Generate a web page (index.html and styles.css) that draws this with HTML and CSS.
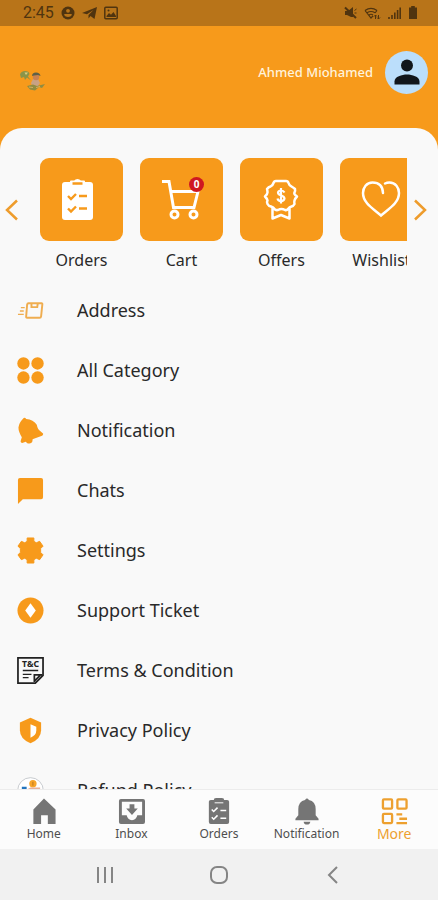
FILE: index.html
```html
<!DOCTYPE html>
<html lang="en">
<head>
<meta charset="utf-8">
<meta name="viewport" content="width=device-width, initial-scale=1">
<title>More</title>
<link rel="stylesheet" href="styles.css">
</head>
<body>
<div class="status">
  <span class="clock">2:45</span>
  <svg width="14" height="14" viewBox="0 0 14 14"><circle cx="7" cy="7" r="6.500" fill="currentColor"/><circle cx="7" cy="4.800" r="1.900" fill="#b87419"/><path d="M3.300 8h7.400v1.200Q9.800 11 7 11T3.300 9.200z" fill="#b87419"/></svg>
  <svg width="15" height="14" viewBox="0 0 15 14"><path d="M0 7 15 1l-2.500 12-4-3-2 2.500V9l5-5-6.500 4.300z" fill="currentColor"/></svg>
  <svg width="14" height="14" viewBox="0 0 14 14"><rect x=".8" y="1.300" width="12.400" height="11.400" rx="1" fill="none" stroke="currentColor" stroke-width="1.500"/><path d="m2.500 10 2.500-3 2 1.800L9.500 6l2.500 4v1H2.500z" fill="currentColor"/><circle cx="4.500" cy="4.500" r="1" fill="currentColor"/></svg>
  <span class="spacer"></span>
  <svg width="13" height="14" viewBox="0 0 13 14"><path d="M1 5h3l5-4v10L7 11 3 9H1z" fill="currentColor"/><path d="m1 1.500 11 10.500" stroke="currentColor" stroke-width="2"/><path d="M10.500 4.500 12.500 3M10.500 7h2" stroke="currentColor"/></svg>
  <svg width="17" height="14" viewBox="0 0 17 14" fill="none" stroke="currentColor" stroke-width="1.200"><path d="M1 4.500Q7 .2 13 4.500M3 6.800q4-2.600 8 0M5 9q2-1.500 4 0M1 4.500 7 12l2-2.200M13 4.500l-2 2.500"/><path d="M11.500 13V9M10 10.500 11.500 9 13 10.500M14.500 9v4M13 11.500l1.500 1.500 1.500-1.500" stroke-width="1"/></svg>
  <svg width="13" height="14" viewBox="0 0 13 14" stroke="currentColor" stroke-width="1.600"><path d="M1 13v-2M4 13V9M6.800 13V6.500M9.600 13V4M12.200 13V1.500"/></svg>
  <svg width="10" height="14" viewBox="0 0 10 14"><path d="M3.200 0h3.600v1.500H9V13H1V1.500h2.200z" fill="currentColor"/></svg>
</div>

<header class="header">
  <svg class="logo" width="26" height="22" viewBox="0 0 26 22"><path d="M0 4.500Q1 1 5 1q4 0 4.500 3L8 6.500l3 4-4-3-2 2.500-1-3-3 1z" fill="#8a9449"/><path d="M4.500 2.500H8L6 5z" fill="#d9cf86"/><path d="m11 13 2-4h5l2 4-2 3h-6z" fill="#c9a284"/><circle cx="16" cy="7" r="3.200" fill="#c98252"/><path d="M12 6q0-3.500 4-3.500T20.500 6L18 5l-4 .5z" fill="#5f6047"/><path d="m7 16 6-1.500 4 1.500 8-2-3 4-3-1-4 3.500-5-1z" fill="#918c41"/><path d="m9 17 4 .5m3 0 4-1" stroke="#d3b060"/></svg>
  <span class="user">Ahmed Miohamed</span>
  <span class="avatar"><svg width="26" height="26" viewBox="0 0 26 26" fill="#11161c"><circle cx="13" cy="6.500" r="6"/><path d="M.5 25.500v-3C.5 17.500 8 15.500 13 15.500s12.500 2 12.500 7v3z"/></svg></span>
</header>

<main class="sheet">
  <section class="carousel" aria-label="Shortcuts">
    <button class="arrow arrow-prev" aria-label="Previous"><svg width="14" height="22" viewBox="0 0 14 22"><path d="M12 1.500 2 11l10 9.500"/></svg></button>
    <div class="track">
      <a class="card" href="#orders"><span class="tile"><svg width="48" height="48" viewBox="0 0 48 48"><rect x="4" y="6" width="31" height="38" rx="3" fill="#fff"/><path d="M13 8V5.500h3.500q3-3 6 0H26V8z" fill="#fff" stroke="#fff" stroke-width="2" stroke-linejoin="round"/><path d="M14.500 7.500h10" stroke="#f79a1b" stroke-width="2.500"/><path d="m10 20 3 3 5-5m3 2h8M10 32.500l3 3 5-5m3 2h8" fill="none" stroke="#f79a1b" stroke-width="2.400"/></svg></span>Orders</a>
      <a class="card" href="#cart"><span class="tile"><svg width="48" height="48" viewBox="0 0 48 48" fill="none" stroke="#fff" stroke-width="3"><path d="M4 5.500h7l4.500 26H36l5-20M13 15.500h27"/><circle cx="16.500" cy="38.500" r="3.500"/><circle cx="35.500" cy="38.500" r="3.500"/></svg><span class="badge">0</span></span>Cart</a>
      <a class="card" href="#offers"><span class="tile"><svg width="48" height="48" viewBox="0 0 48 48" fill="none" stroke="#fff"><path d="M18 5H28Q30 5 30.500 7T33.500 10.500T37 13Q37.500 15 36.500 16.500T39 20.500Q37 22.500 36.500 24.500T36.500 28Q35.500 30 33.500 30.500T30 33Q29 34.500 27 34Q23.500 32 20 34Q17.500 34.500 16.500 33T13 30.500Q10.500 30 9.500 28T9.500 24.500Q9 22.500 7 20.500Q9.500 18 9.500 16.500T9 13Q10.500 11 12.500 10.500T15.500 7Q16 5 18 5zM14.500 32v10.500l8.500-3.500 8.500 3.500V32" stroke-width="2.500" stroke-linejoin="round"/><path d="M26.500 16.500q-1-2-3.500-2t-3 2q0 2 3.200 3t3.300 3Q26 25 23 25T19.500 22.500M23 12v15.500" stroke-width="2.200"/></svg></span>Offers</a>
      <a class="card" href="#wishlist"><span class="tile"><svg width="48" height="48" viewBox="0 0 48 48"><path d="M25 17Q24.500 6.500 14.500 6.500C8.500 6.500 5 11.500 5 17 5 27 15 32.500 23 39.500c8-7 18-12.500 18-22.500C41 11.500 37.500 6.500 31.500 6.500q-2.500 0-4.500 1" fill="none" stroke="#fff" stroke-width="2.500" stroke-linecap="round"/></svg></span>Wishlist</a>
    </div>
    <button class="arrow arrow-next" aria-label="Next"><svg width="14" height="22" viewBox="0 0 14 22"><path d="m2 1.500 10 9.500-10 9.500"/></svg></button>
  </section>

  <nav class="menu" aria-label="Account">
    <a class="row" href="#address"><svg width="28" height="28" viewBox="0 0 28 28" fill="none" stroke="#efad50" stroke-width="2"><path d="M12 6.500h13.500q1 0 .8 1L25 20q-.2 1.500-1.500 1.500H10.500q-1.200 0-1-1.500L10.500 8q.2-1.500 1.500-1.500zM15 7v3.500h6L21.500 7"/><path d="M4 11h4M3 14.500h4M1 18h6" stroke-width="1.500"/></svg>Address</a>
    <a class="row" href="#category"><svg width="28" height="28" viewBox="0 0 28 28" fill="#f79a1b"><circle cx="6.700" cy="6.700" r="6.400"/><circle cx="21.300" cy="6.700" r="6.400"/><circle cx="6.700" cy="21.300" r="6.400"/><circle cx="21.300" cy="21.300" r="6.400"/></svg>All Category</a>
    <a class="row" href="#notification"><svg width="28" height="28" viewBox="0 0 28 28" fill="#f79a1b"><path d="M6 2Q8-.5 9.500 2Q17 2.500 20.500 8Q21.500 13 24 14.500L27 17Q27.500 18.500 26 19.500L5.500 27Q3.500 27 3.800 25L5 21Q1.500 15.500 1.500 11Q2 6 6 2z"/><path d="M9 24.500 16 22q1 5-3 5.500-3.500 0-4-3z"/></svg>Notification</a>
    <a class="row" href="#chats"><svg width="28" height="28" viewBox="0 0 28 28" fill="#f79a1b"><path d="M3 1h22q2 0 2 2v18q0 2-2 2H6l-5 5V3q0-2 2-2z"/></svg>Chats</a>
    <a class="row" href="#settings"><svg width="28" height="28" viewBox="0 0 28 28" fill="#f79a1b"><path d="M10.500 1h7v3.500L20 6l3.500-1.500 3.500 5-2.500 2.500v4l2.500 2.500-3.500 5L20 22l-2.500 1.500V27h-7v-3.500L8 22l-3.500 1.500-3.500-5L3.500 16v-4L1 9.500l3.500-5L8 6l2.500-1.500z" stroke="#f79a1b" stroke-linejoin="round"/></svg>Settings</a>
    <a class="row" href="#support"><svg width="28" height="28" viewBox="0 0 28 28"><circle cx="14" cy="14" r="13.500" fill="#f79a1b"/><path d="m14 6.500 5.500 7.500-5.500 7.500L8.500 14z" fill="#fff"/></svg>Support Ticket</a>
    <a class="row" href="#terms"><svg width="28" height="28" viewBox="0 0 28 28" fill="none" stroke="#222" stroke-width="1.800"><path d="M1 1h26v18l-8 8H1zM18 26v-7.500h8M24 19l-6 6"/><path d="M6 14h16M6 18h9M6 21.500h6" stroke-width="1.300"/><text x="14" y="10.500" class="terms">T&amp;C</text></svg>Terms &amp; Condition</a>
    <a class="row" href="#privacy"><svg width="28" height="28" viewBox="0 0 28 28"><path d="m14 .8 11 5v8q0 9-11 13.500Q3 22.800 3 13.800v-8z" fill="#f79a1b"/><path d="M14 7.500 20 10v4q0 5-6 7.500z" fill="#fff"/></svg>Privacy Policy</a>
    <a class="row" href="#refund"><svg width="28" height="28" viewBox="0 0 28 28"><circle cx="14" cy="14" r="13.300" fill="#fff" stroke="#b9bcc2" stroke-width=".8"/><circle cx="16.500" cy="7" r="3.800" fill="#f7a52a"/><path d="M16.500 5v4" stroke="#b9751c"/><path d="m10 13 4-2h10v5H10z" fill="#e7b29a"/><path d="M5 10h5v10l-5-2z" fill="#2375bf"/></svg>Refund Policy</a>
  </nav>
</main>

<nav class="tabs" aria-label="Main">
  <a class="tab" href="#home"><svg width="28" height="28" viewBox="0 0 28 28" fill="#757575"><path d="m14.500 .5 12 11.500v15h-8v-9h-7v9h-8V12z"/></svg>Home</a>
  <a class="tab" href="#inbox"><svg width="28" height="28" viewBox="0 0 28 28"><path d="M3 1h23q2 0 2 2v22q0 2-2 2H3q-2 0-2-2V3q0-2 2-2zm1 3v14h5q1 5 5.500 5t5.500-5h5V4z" fill="#757575" fill-rule="evenodd"/><path d="M12 6.500h5V11h3.500l-6 6.500-6-6.500H12z" fill="#757575"/></svg>Inbox</a>
  <a class="tab" href="#orders"><svg width="28" height="28" viewBox="0 0 28 28"><rect x="4" y="2" width="21" height="25" rx="2" fill="#757575"/><rect x="9" y="0" width="11" height="7" rx="2.500" fill="#757575"/><path d="M10 5h9" stroke="#fff"/><path d="m7 12 2 2 4-4m3 3h6M7 20l2 2 4-4m3 3h6" fill="none" stroke="#fff" stroke-width="1.600"/></svg>Orders</a>
  <a class="tab" href="#notification"><svg width="28" height="28" viewBox="0 0 28 28" fill="#757575"><path d="M12.500 2Q14.500-1 16.500 2q7 1.500 7 9.500V18l3 3.500V23h-24v-1.500L5.500 18v-6.500q0-8 7-9.500zM11 24.500h7q-.5 3-3.500 3t-3.500-3z"/></svg>Notification</a>
  <a class="tab tab-active" href="#more" aria-current="page"><svg width="28" height="28" viewBox="0 0 28 28" fill="none" stroke="#eda02f" stroke-width="2.400"><rect x="2" y="1.500" width="9.500" height="9.500" rx="1"/><rect x="17" y="1.500" width="9.500" height="9.500" rx="1"/><rect x="2" y="16.500" width="9.500" height="9.500" rx="1"/><path d="M16 17h6M19 21.500h8M16 26h11"/></svg>More</a>
</nav>

<div class="system">
  <button aria-label="Recent apps"><svg width="20" height="20" viewBox="0 0 20 20"><path d="M3 2v16M10 2v16M17 2v16"/></svg></button>
  <button aria-label="Home"><svg width="20" height="20" viewBox="0 0 20 20"><rect x="2" y="2" width="16" height="16" rx="6"/></svg></button>
  <button aria-label="Back"><svg width="20" height="20" viewBox="0 0 20 20"><path d="m14 2-8 8 8 8"/></svg></button>
</div>
</body>
</html>
```
FILE: styles.css
```css
* { box-sizing: border-box; }

body {
  margin: 0;
  height: 100vh;
  display: flex;
  flex-direction: column;
  overflow: hidden;
  background: #f79a1b;
  color: #292929;
  font-family: "Noto Sans", "Open Sans", sans-serif;
}

a { color: inherit; text-decoration: none; }
svg { display: block; flex: none; }
button { padding: 0; border: 0; background: none; }

.status {
  display: flex;
  align-items: center;
  gap: 7px;
  flex: none;
  height: 26px;
  padding: 0 20px 0 23px;
  background: #b87419;
  color: #50340f;
}
.clock { font: 16px/26px Roboto, sans-serif; }
.spacer { flex: 1; }

.header {
  display: flex;
  align-items: center;
  flex: none;
  height: 102px;
  padding: 0 10px 10px 20px;
}
.logo { margin-top: 18px; }
.user {
  flex: 1;
  padding-right: 12px;
  color: #fff3dc;
  font-size: 13px;
  font-weight: 500;
  text-align: right;
}
.avatar {
  display: grid;
  place-items: center;
  width: 43px;
  height: 43px;
  border-radius: 50%;
  background: #bbdefb;
}

.sheet {
  display: flex;
  flex-direction: column;
  flex: 1;
  min-height: 0;
  padding-top: 30px;
  border-radius: 22px 22px 0 0;
  background: #f9f9f9;
}

.carousel { display: flex; flex: none; height: 122px; }
.track { display: flex; flex: 1; gap: 17px; min-width: 0; overflow: hidden; }
.card {
  flex: 0 0 83px;
  font-size: 16px;
  line-height: 38px;
  text-align: center;
}
.tile {
  position: relative;
  display: grid;
  place-items: center;
  height: 83px;
  border-radius: 9px;
  background: #f79a1b;
}
.tile svg { width: 48px; height: 48px; }
.badge {
  position: absolute;
  top: 19px;
  right: 19px;
  width: 15px;
  height: 15px;
  border-radius: 50%;
  background: #cf1721;
  color: #fff;
  font-size: 10px;
  font-weight: 700;
  line-height: 15px;
}
.arrow { display: flex; align-items: center; height: 104px; }
.arrow path { fill: none; stroke: #ee9c2c; stroke-width: 2.5; }
.arrow-prev { width: 40px; padding-left: 5px; }
.arrow-next { width: 31px; padding-left: 6px; }

.menu { flex: 1; min-height: 0; overflow: hidden; }
.row {
  display: flex;
  align-items: center;
  gap: 33px;
  height: 60px;
  padding: 0 17px;
  font-size: 18px;
}
.row svg { width: 27px; height: 27px; }
.terms {
  fill: #222;
  stroke: none;
  font: 700 9px "Noto Sans", sans-serif;
  text-anchor: middle;
}

.tabs {
  display: flex;
  flex: none;
  height: 60px;
  border-top: 1px solid #ececec;
  background: #fcfcfc;
  color: #4e4e4e;
}
.tab {
  display: flex;
  flex: 1 1 0;
  flex-direction: column;
  align-items: center;
  padding-top: 8px;
  font-size: 12px;
  line-height: 18px;
}
.tab svg { width: 27px; height: 27px; }
.tab-active { color: #eda02f; font-size: 14px; }

.system {
  display: flex;
  justify-content: center;
  gap: 94px;
  flex: none;
  height: 51px;
  background: #f1f1f1;
}
.system svg { fill: none; stroke: #858585; stroke-width: 2; }
```
